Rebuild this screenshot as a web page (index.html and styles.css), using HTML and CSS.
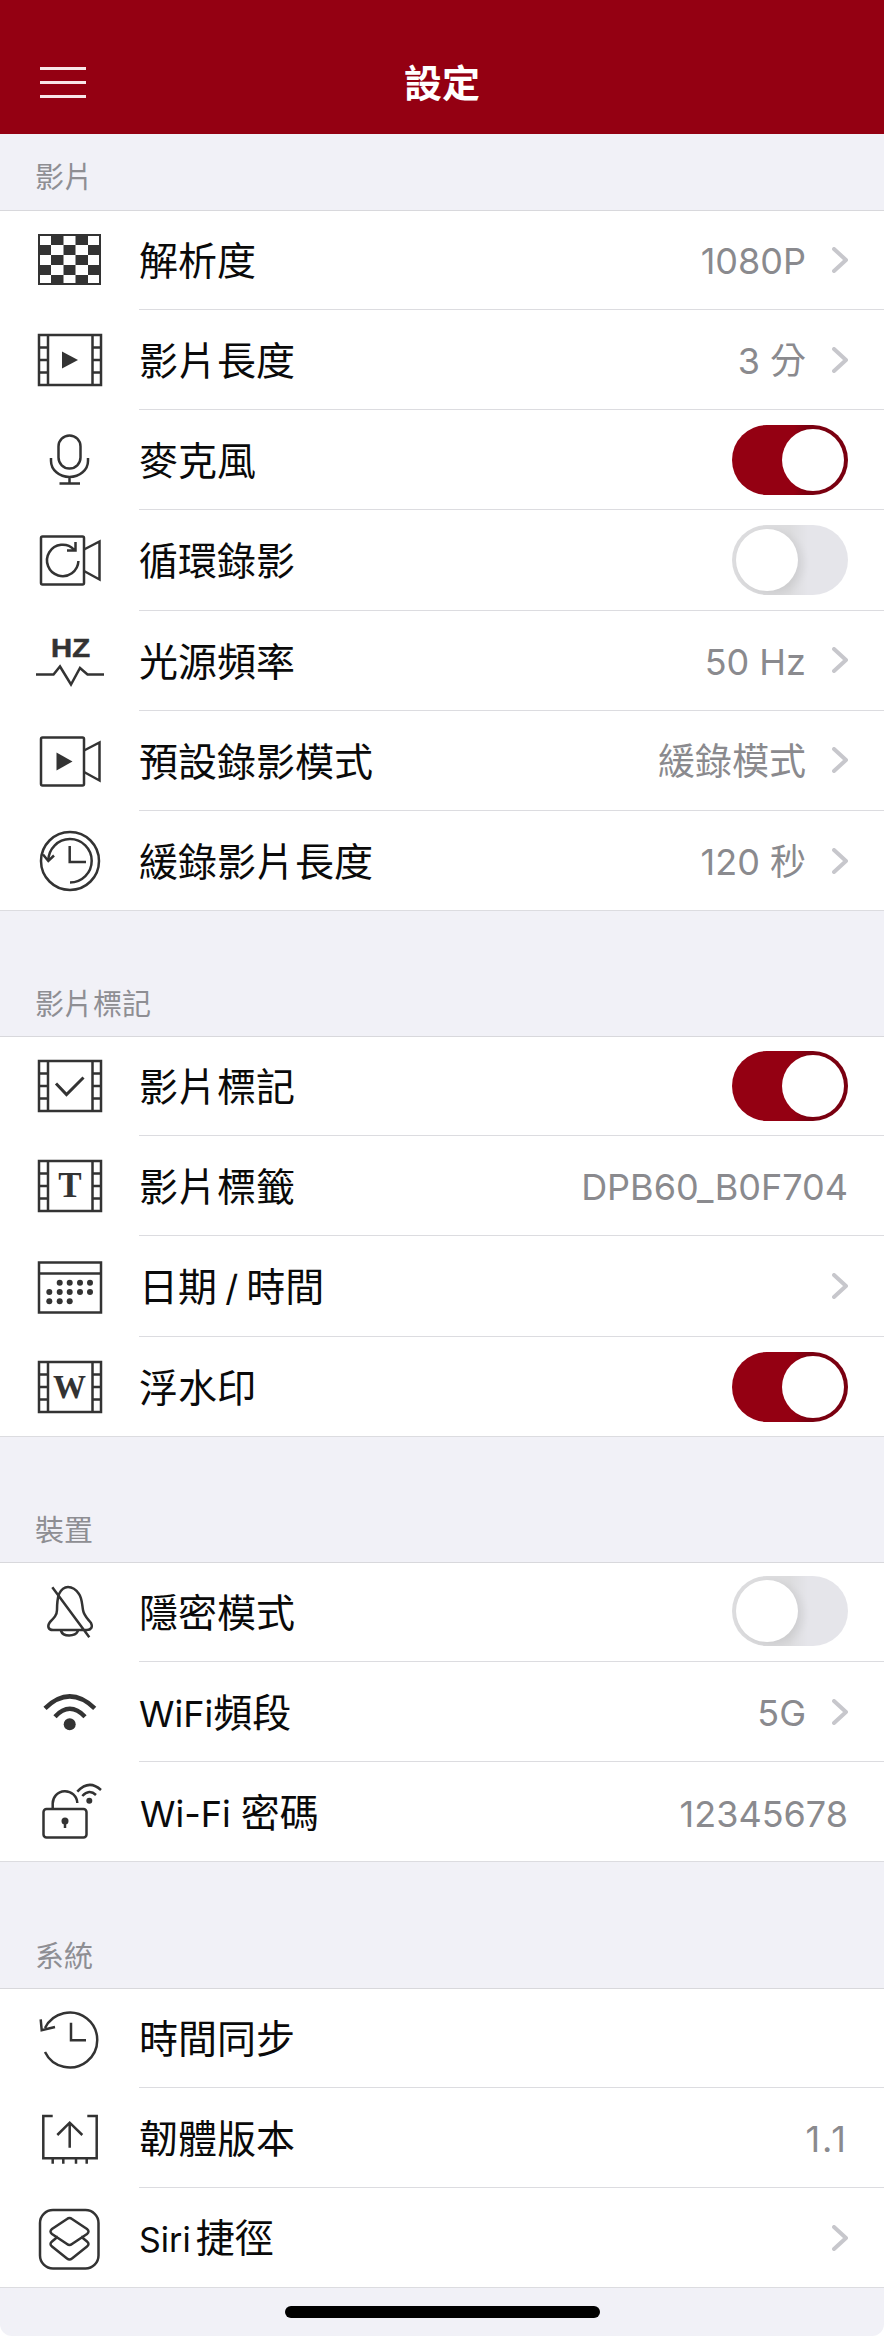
FILE: index.html
```html
<!DOCTYPE html>
<html lang="zh-Hant">
<head>
<meta charset="utf-8">
<title>設定</title>
<link rel="stylesheet" href="styles.css">
</head>
<body>
<svg class="sprite" width="0" height="0" aria-hidden="true">
  <defs>
    <g id="film">
      <rect x="9" y="10" width="62" height="50"/>
      <path d="M18 10V60M62.5 10V60M9 22.5H18M9 35H18M9 47.5H18M62.5 22.5H71M62.5 35H71M62.5 47.5H71"/>
    </g>
    <g id="cam">
      <rect x="11" y="11.5" width="43" height="48" rx="1.5"/>
      <path d="M54 24.5L69.5 16.5V54.5L54 46"/>
    </g>
  </defs>
</svg>
<div class="app">
  <header class="topbar">
    <div class="burger"><i></i><i></i><i></i></div>
    <h1>設定</h1>
  </header>

  <h2 class="head head-first">影片</h2>
  <section class="group">
    <div class="row">
      <svg class="icon" viewBox="0 0 80 70"><rect class="fill" x="8" y="9" width="63" height="51"/><path class="paper" d="M10 11h11v9H10zM33.500 11h12v9h-12zM58 11h11v9H58zM21 20h12.500v10H21zM45.500 20H58v10H45.500zM10 30h11v10H10zM33.500 30h12v10h-12zM58 30h11v10H58zM21 40h12.500v10H21zM45.500 40H58v10H45.500zM10 50h11v8H10zM33.500 50h12v8h-12zM58 50h11v8H58z"/></svg>
      <div class="body"><span class="label">解析度</span><span class="value">1080P</span><svg class="chev" viewBox="0 0 16 26"><path d="M2 2L14 13L2 24"/></svg></div>
    </div>
    <div class="row">
      <svg class="icon" viewBox="0 0 80 70"><use href="#film"/><path class="fill" d="M32 26.500L48 35L32 43.500Z"/></svg>
      <div class="body"><span class="label">影片長度</span><span class="value">3 分</span><svg class="chev" viewBox="0 0 16 26"><path d="M2 2L14 13L2 24"/></svg></div>
    </div>
    <div class="row">
      <svg class="icon" viewBox="0 0 80 70"><rect x="28.500" y="10.500" width="22" height="33" rx="11"/><path d="M21 33v3a18.500 16 0 0 0 37 0v-3M39.500 52v6M29.500 58.500h20.500"/></svg>
      <div class="body"><span class="label">麥克風</span><span class="toggle on"><i></i></span></div>
    </div>
    <div class="row">
      <svg class="icon" viewBox="0 0 80 70"><use href="#cam"/><path d="M48.400 36A15.700 15.700 0 1 1 44 24.500M45.500 17V25.500H37"/></svg>
      <div class="body"><span class="label">循環錄影</span><span class="toggle"><i></i></span></div>
    </div>
    <div class="row">
      <svg class="icon" viewBox="0 0 80 70"><text class="hz" x="21" y="31" textLength="39" lengthAdjust="spacingAndGlyphs">HZ</text><path d="M6 48.500H23.500L30 40.500L41 58.500L50 42L57.500 48.500H74"/></svg>
      <div class="body"><span class="label">光源頻率</span><span class="value">50 Hz</span><svg class="chev" viewBox="0 0 16 26"><path d="M2 2L14 13L2 24"/></svg></div>
    </div>
    <div class="row">
      <svg class="icon" viewBox="0 0 80 70"><use href="#cam"/><path class="fill" d="M26.500 26.500L42.500 35.500L26.500 44.500Z"/></svg>
      <div class="body"><span class="label">預設錄影模式</span><span class="value cjk">緩錄模式</span><svg class="chev" viewBox="0 0 16 26"><path d="M2 2L14 13L2 24"/></svg></div>
    </div>
    <div class="row">
      <svg class="icon" viewBox="0 0 80 70"><circle cx="40" cy="35" r="29"/><path d="M18.300 35A21.700 21.700 0 1 1 40 56.500M39.700 20V36H56M13 28.500L18.300 35L24 29.500"/></svg>
      <div class="body"><span class="label">緩錄影片長度</span><span class="value">120 秒</span><svg class="chev" viewBox="0 0 16 26"><path d="M2 2L14 13L2 24"/></svg></div>
    </div>
  </section>

  <h2 class="head">影片標記</h2>
  <section class="group">
    <div class="row">
      <svg class="icon" viewBox="0 0 80 70"><use href="#film"/><path class="thick" d="M26 32.500L36.500 43.500L53.500 26.500"/></svg>
      <div class="body"><span class="label">影片標記</span><span class="toggle on"><i></i></span></div>
    </div>
    <div class="row">
      <svg class="icon" viewBox="0 0 80 70"><use href="#film"/><text class="serif t" x="40" y="46">T</text></svg>
      <div class="body"><span class="label">影片標籤</span><span class="value plain">DPB60_B0F704</span></div>
    </div>
    <div class="row">
      <svg class="icon" viewBox="0 0 80 70"><rect x="9" y="10.500" width="62" height="50"/><path d="M9 21.500H71"/><g class="fill"><circle cx="29.700" cy="30.700" r="3"/><circle cx="39.700" cy="30.700" r="3"/><circle cx="50" cy="30.700" r="3"/><circle cx="60" cy="30.700" r="3"/><circle cx="19.300" cy="40" r="3"/><circle cx="29.700" cy="40" r="3"/><circle cx="39.700" cy="40" r="3"/><circle cx="50" cy="40" r="3"/><circle cx="60" cy="40" r="3"/><circle cx="19.300" cy="49.300" r="3"/><circle cx="29.700" cy="49.300" r="3"/><circle cx="39.700" cy="49.300" r="3"/></g></svg>
      <div class="body"><span class="label">日期<span class="lat slash"> / </span>時間</span><svg class="chev" viewBox="0 0 16 26"><path d="M2 2L14 13L2 24"/></svg></div>
    </div>
    <div class="row">
      <svg class="icon" viewBox="0 0 80 70"><use href="#film"/><text class="serif w" x="39.500" y="45.500">W</text></svg>
      <div class="body"><span class="label">浮水印</span><span class="toggle on"><i></i></span></div>
    </div>
  </section>

  <h2 class="head">裝置</h2>
  <section class="group">
    <div class="row">
      <svg class="icon" viewBox="0 0 80 70"><path d="M38 10C44 10 47 14 49 17C52 21 52 27 53 33C54 39 58 42 61 46C63 50 61 53 57 53H23C18 53 17 49 20 45C24 41 27 38 27 33C27 27 27 23 29 17C31 13 34 10 38 10ZM31 54C33 60 45 60 48 54M22.300 10.300L59.300 60.300"/></svg>
      <div class="body"><span class="label">隱密模式</span><span class="toggle"><i></i></span></div>
    </div>
    <div class="row">
      <svg class="icon" viewBox="0 0 80 70"><circle class="fill" cx="39.700" cy="47.300" r="6"/><path class="wifi" d="M15 31.300Q39.700 7.500 64.700 31.300M25 39.700Q39.700 24 55 39.700"/></svg>
      <div class="body"><span class="label"><span class="lat">WiFi</span>頻段</span><span class="value">5G</span><svg class="chev" viewBox="0 0 16 26"><path d="M2 2L14 13L2 24"/></svg></div>
    </div>
    <div class="row">
      <svg class="icon" viewBox="0 0 80 70"><rect x="13.500" y="32" width="43" height="28.500" rx="3"/><path d="M22.700 32V27A12.300 12.300 0 0 1 47.300 26M47.300 14.700Q59 2 71 13M52.300 19Q59.300 11.500 66 18"/><circle class="fill" cx="59.300" cy="23.700" r="3"/><circle class="fill" cx="35" cy="44" r="3.500"/><path d="M35 44V51"/></svg>
      <div class="body"><span class="label label-wifi"><span class="lat">Wi-Fi </span>密碼</span><span class="value plain">12345678</span></div>
    </div>
  </section>

  <h2 class="head">系統</h2>
  <section class="group">
    <div class="row">
      <svg class="icon" viewBox="0 0 80 70"><path d="M15 25A27.500 27.500 0 1 1 15 49M10.700 16.300L11.700 27.300L25 24M41 19.700V37.300H56"/></svg>
      <div class="body"><span class="label">時間同步</span></div>
    </div>
    <div class="row">
      <svg class="icon" viewBox="0 0 80 70"><path d="M22.700 13H13.300V55.300H66.700V13H57.300M22.700 55.300V60.700M33.300 55.300V60.700M46 55.300V60.700M56.700 55.300V60.700M39.700 44.800V19.700M27.300 32L39.700 19.700L52.300 32"/></svg>
      <div class="body"><span class="label">韌體版本</span><span class="value plain ver">1.1</span></div>
    </div>
    <div class="row">
      <svg class="icon" viewBox="0 0 80 70"><rect x="10" y="7" width="58.500" height="58.500" rx="13"/><path d="M37 16Q39.500 14 42 16L57 26Q60 28.500 57 31L42 41Q39.500 43 37 41L22 31Q19 28.500 22 26ZM28 33.500L22 38.500Q19 41 22 43.500L37 55.500Q39.500 57.500 42 55.500L57 43.500Q60 41 57 38.500L51 33.500"/></svg>
      <div class="body"><span class="label"><span class="lat siri">Siri</span>捷徑</span><svg class="chev" viewBox="0 0 16 26"><path d="M2 2L14 13L2 24"/></svg></div>
    </div>
  </section>

  <footer class="home"><i></i></footer>
</div>
</body>
</html>
```

FILE: styles.css
```css
* { box-sizing: border-box; }
html, body { margin: 0; padding: 0; background: #fff; }
body {
  width: 884px;
  height: 2336px;
  overflow: hidden;
  font-family: Inter, "Noto Sans CJK TC", "Noto Sans", sans-serif;
}
.sprite { position: absolute; }
.app {
  height: 2336px;
  background: #f1f1f7;
  border-radius: 0 0 12px 12px;
  overflow: hidden;
}
.topbar {
  height: 134px;
  padding-top: 32px;
  background: #940012;
  display: flex;
  align-items: center;
  justify-content: center;
  position: relative;
}
.topbar h1 {
  margin: 0;
  color: #fff;
  font-size: 38px;
  line-height: 44px;
  font-weight: 700;
}
.burger {
  position: absolute;
  left: 40px;
  top: 67px;
  width: 46px;
  display: flex;
  flex-direction: column;
  gap: 11px;
}
.burger i { display: block; height: 3px; background: #f8e6e8; }

.head {
  margin: 0;
  height: 125.2px;
  padding: 0 0 15px 35px;
  display: flex;
  align-items: flex-end;
  font-size: 29px;
  line-height: 32px;
  font-weight: 400;
  color: #8e8e93;
}
.head-first { height: 76px; padding-bottom: 16px; }

.group { background: #fff; box-shadow: inset 0 1px 0 #d8d8dc; }
.row {
  height: 100.15px;
  display: flex;
  align-items: stretch;
  padding-left: 30px;
}
.row:last-child { box-shadow: inset 0 -1px 0 #dcdce0; }
.icon {
  flex: none;
  width: 80px;
  height: 70px;
  align-self: center;
  margin-right: 29px;
  fill: none;
  stroke: #333;
  stroke-width: 2.5;
}
.icon .fill { fill: #333; stroke: none; }
.icon .paper { fill: #fff; stroke: none; }
.icon .thick { stroke-width: 3; }
.icon .wifi { stroke-width: 4.5; }
.icon use { fill: none; }
.icon text { fill: #333; stroke: none; text-anchor: middle; }
.icon .hz { font-family: "Liberation Sans", sans-serif; font-weight: 700; font-size: 25px; text-anchor: start; stroke: #333; stroke-width: .5; }
.icon .serif { font-family: "Liberation Serif", serif; font-weight: 700; }
.icon .t { font-size: 35px; }
.icon .w { font-size: 33px; }

.body {
  flex: 1;
  min-width: 0;
  display: flex;
  align-items: center;
  padding-right: 36px;
  border-bottom: 1px solid #dcdce0;
}
.row:last-child .body { border-bottom: 0; }
.label { flex: 1; padding-top: 3px; font-size: 39px; line-height: 48px; color: #0a0a0a; }
.label-wifi { padding-left: 1px; }
.lat { font-size: 36px; }
.slash { word-spacing: -2px; }
.siri { font-size: 34px; margin-right: 5px; }
.value { padding-top: 3px; font-size: 36px; line-height: 44px; color: #8a8a8e; margin-right: 26px; }
.value.cjk { font-size: 37px; }
.value.plain { margin-right: 0; }
.value.ver { letter-spacing: 2px; }
.chev {
  flex: none;
  width: 16px;
  height: 26px;
  fill: none;
  stroke: #c7c7cc;
  stroke-width: 4;
  stroke-linecap: round;
  stroke-linejoin: round;
}
.toggle {
  flex: none;
  width: 116px;
  height: 70px;
  padding: 4px;
  border-radius: 35px;
  background: linear-gradient(90deg, #dcdcde 0, #dcdcde 58px, #e5e5ea 76px);
  display: flex;
  overflow: hidden;
}
.toggle i {
  display: block;
  width: 62px;
  height: 62px;
  border-radius: 50%;
  background: #fff;
  box-shadow: 5px 3px 8px rgba(0, 0, 0, .07);
}
.toggle.on {
  background: linear-gradient(90deg, #940012 0, #940012 62px, #7a0010 76px);
  justify-content: flex-end;
}
.toggle.on i { box-shadow: none; }

.home {
  height: 48px;
  display: flex;
  justify-content: center;
  padding-top: 18px;
}
.home i {
  display: block;
  width: 315px;
  height: 12px;
  border-radius: 6px;
  background: #000;
}
```
